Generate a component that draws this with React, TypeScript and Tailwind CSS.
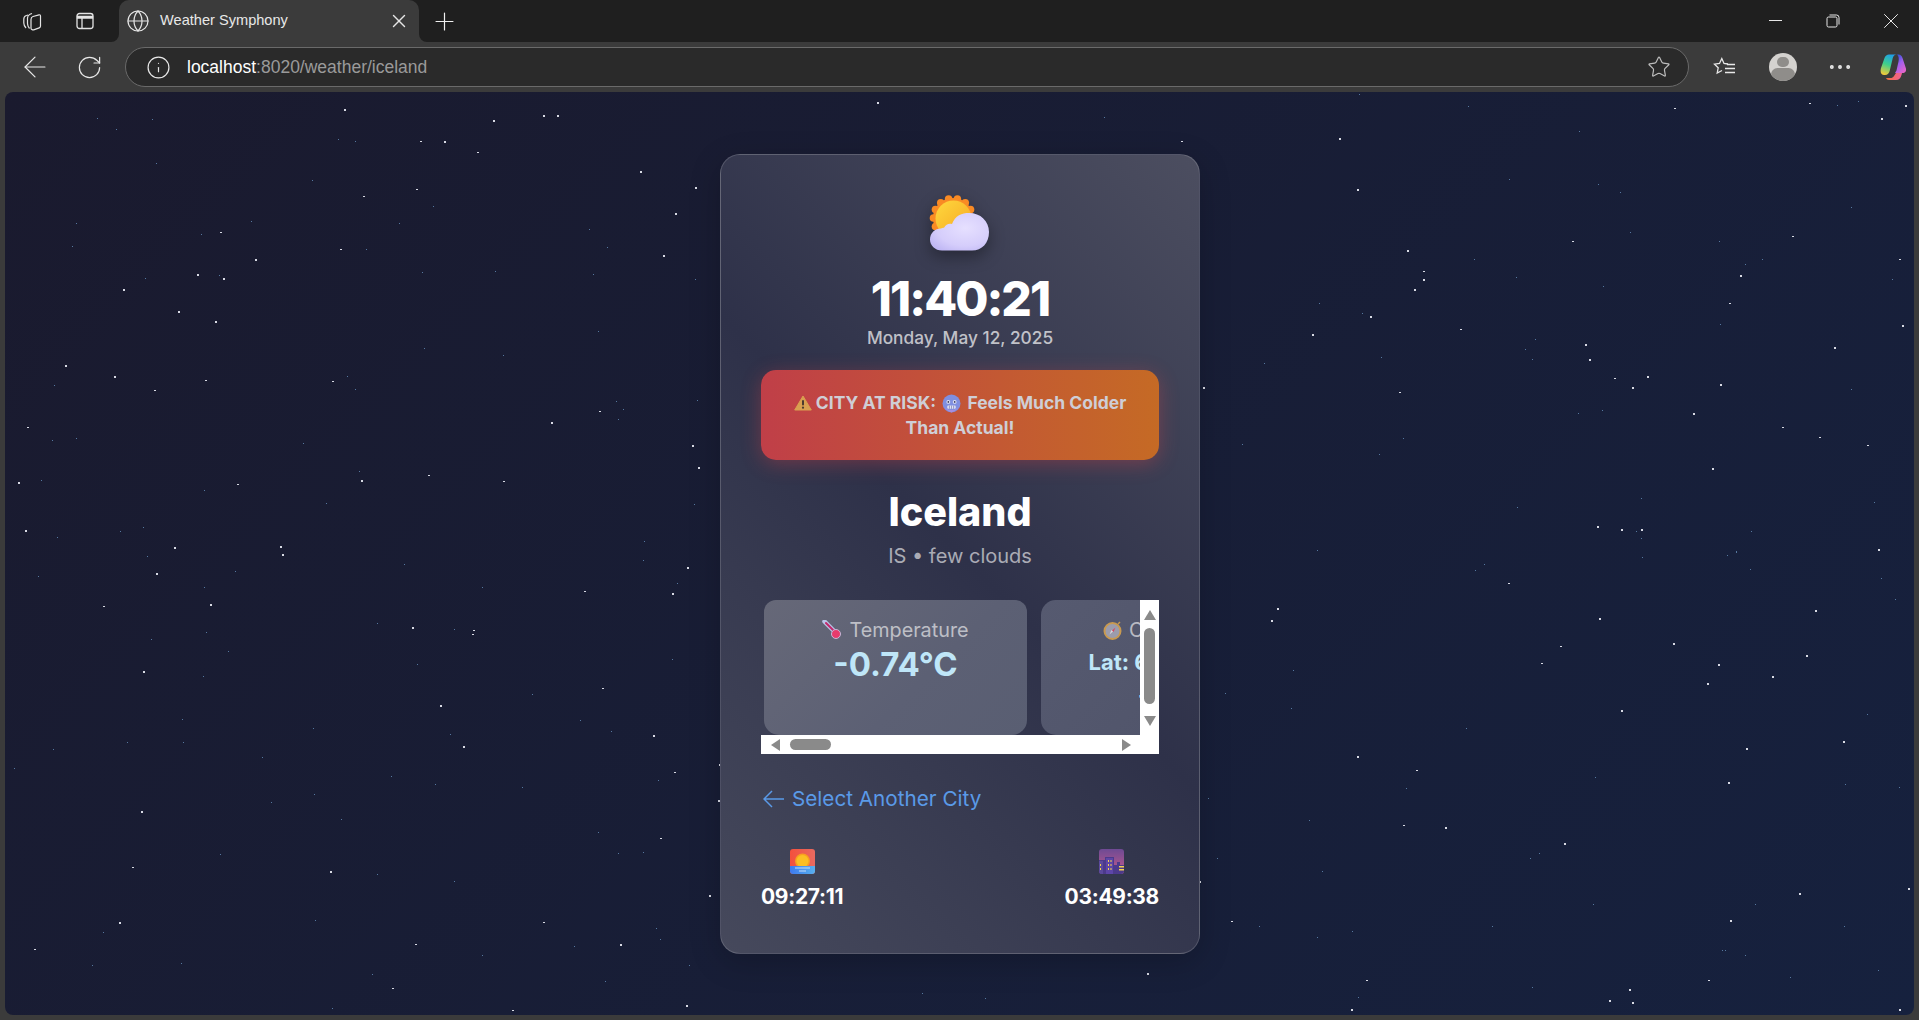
import { ArrowLeft, Globe, Info, MoreHorizontal, Plus, RotateCw, Star, X } from 'lucide-react'

// star field, seeded so it stays the same on every load
function makeStars() {
  let seed = 20250512
  const rnd = () => {
    seed = (seed * 1664525 + 1013904223) % 4294967296
    return seed / 4294967296
  }
  const stars = []
  for (let i = 0; i < 400; i++) {
    const bright = rnd() > 0.62
    stars.push({
      x: Math.floor(rnd() * 1909),
      y: Math.floor(rnd() * 922),
      w: bright ? 2 : 1,
      h: bright && rnd() > 0.35 ? 2 : 1,
      c: bright ? '#d8dae4' : '#56789f',
    })
  }
  return stars
}

const stars = makeStars()
const scallops = [0, 26, 51, 77, 103, 129, 154, 180, 206, 231, 257, 283, 309, 334]

function SunCloud() {
  return (
    <svg width="62" height="58" viewBox="0 0 62 58" className="drop-shadow-[0_6px_8px_rgba(0,0,0,0.35)]">
      <defs>
        <linearGradient id="sun" x1="0" y1="0" x2="1" y2="1">
          <stop offset="0" stopColor="#ffd83d" />
          <stop offset="1" stopColor="#f5a623" />
        </linearGradient>
        <radialGradient id="cloud" cx="0.6" cy="0.4" r="0.8">
          <stop offset="0" stopColor="#e6e0ff" />
          <stop offset="0.6" stopColor="#d5cdfb" />
          <stop offset="1" stopColor="#b9b0f2" />
        </radialGradient>
      </defs>
      {scallops.map((a) => (
        <circle
          key={a}
          cx={24 + 19.5 * Math.cos((a * Math.PI) / 180)}
          cy={23 + 19.5 * Math.sin((a * Math.PI) / 180)}
          r="3.800"
          fill="#f98a24"
        />
      ))}
      <circle cx="24" cy="23" r="20" fill="#f98a24" />
      <circle cx="24.500" cy="23.500" r="18" fill="url(#sun)" />
      <path
        d="M13 55.500C6 55.500 1 50.500 1 44.500 1 38 6 33.500 12 33.500c1-.4 2-1 3-.8 2-3.600 5-4.600 8-3.600C26 20.500 33 18 40 18c11.500 0 20 8 20 19 0 11-7 18.500-17 18.500Z"
        fill="url(#cloud)"
      />
    </svg>
  )
}

function ThermometerIcon() {
  return (
    <svg width="20" height="20" viewBox="0 0 20 20">
      <path d="M2.500 1.500 13.500 12.500" stroke="#b9c4e8" strokeWidth="4.500" strokeLinecap="round" />
      <path d="M4 3 13.500 12.500" stroke="#c2286a" strokeWidth="2" strokeLinecap="round" />
      <circle cx="14" cy="14" r="4.500" fill="#e83a6c" stroke="#c7b6d8" strokeWidth="1" />
    </svg>
  )
}

function CompassIcon() {
  return (
    <svg width="19" height="19" viewBox="0 0 19 19">
      <circle cx="9.500" cy="10" r="8" fill="#9c9cac" stroke="#c99a50" strokeWidth="2" />
      <path d="m12.500 6.500-2 4.500-1.500-1.500Z" fill="#d84860" />
      <path d="m6.500 13.500 2-4.500 1.500 1.500Z" fill="#d8d8e0" />
      <path d="m15 3 2-2" stroke="#c99a50" strokeWidth="1.500" />
    </svg>
  )
}

function WarningIcon() {
  return (
    <svg width="18" height="16" viewBox="0 0 18 16" className="inline-block align-[-2px]">
      <path d="M9 1 17.300 15H.7Z" fill="#d9a050" stroke="#d9a050" strokeLinejoin="round" />
      <rect x="8" y="5" width="2" height="5.500" rx="1" fill="#4a3a30" />
      <circle cx="9" cy="12.700" r="1.100" fill="#4a3a30" />
    </svg>
  )
}

function ColdFaceIcon() {
  return (
    <svg width="19" height="19" viewBox="0 0 18 18" className="inline-block align-[-4px] mx-[2px]">
      <circle cx="9" cy="9" r="8.500" fill="#7f8fe0" />
      <path d="M.8 9a8.500 8.500 0 0 0 16.400 0c-1 1-1 6-8.200 8.500C2 15 1.800 10 .8 9Z" fill="#a58ee0" />
      <circle cx="6" cy="7.500" r="1.800" fill="#e0e4f4" />
      <circle cx="12" cy="7.500" r="1.800" fill="#e0e4f4" />
      <circle cx="6" cy="7.500" r=".8" fill="#33335a" />
      <circle cx="12" cy="7.500" r=".8" fill="#33335a" />
      <rect x="5" y="11" width="8" height="3" rx="1" fill="#e0e4f4" />
      <path d="M7 11v3M9 11v3M11 11v3" stroke="#6a6aa8" strokeWidth=".6" />
    </svg>
  )
}

function SunriseIcon() {
  return (
    <svg width="25" height="25" viewBox="0 0 25 25">
      <defs>
        <linearGradient id="rise" x1="0" y1="0" x2="1" y2="0">
          <stop offset="0" stopColor="#f4503c" />
          <stop offset="1" stopColor="#e86a60" />
        </linearGradient>
        <linearGradient id="sea" x1="0" y1="0" x2="1" y2="0">
          <stop offset="0" stopColor="#3d7af0" />
          <stop offset="1" stopColor="#58b0ee" />
        </linearGradient>
        <clipPath id="riseClip">
          <rect width="25" height="25" rx="3" />
        </clipPath>
      </defs>
      <g clipPath="url(#riseClip)">
        <rect width="25" height="25" fill="url(#rise)" />
        <circle cx="12.500" cy="12" r="7.500" fill="#f8a020" />
        <circle cx="12.500" cy="12" r="6" fill="#fbbf24" />
        <rect y="17" width="25" height="8" fill="url(#sea)" />
        <path d="M5 19h15M9 22h7" stroke="#c4def8" strokeWidth="1" />
      </g>
    </svg>
  )
}

function CityDuskIcon() {
  return (
    <svg width="25" height="25" viewBox="0 0 25 25">
      <defs>
        <linearGradient id="dusk" x1="0" y1="0" x2="0" y2="1">
          <stop offset="0" stopColor="#6e4a94" />
          <stop offset="1" stopColor="#c45a8c" />
        </linearGradient>
        <clipPath id="duskClip">
          <rect width="25" height="25" rx="3" />
        </clipPath>
      </defs>
      <g clipPath="url(#duskClip)">
        <rect width="25" height="25" fill="url(#dusk)" />
        <path d="M0 11h6V8h9v8h3v-3h3v3h4v9H0Z" fill="#4c3a8c" />
        <path d="M0 12h4v13H0Z" fill="#5c4a9c" />
        <path d="M7 9h7v16H7Z" fill="#5e46a8" />
        <path d="M9 11h1v2H9Zm2.500 0h1v2h-1ZM9 15h1v2H9Zm2.500 0h1v2h-1ZM9 19h1v2H9Zm2.500 0h1v2h-1ZM1 15h1v2H1Zm0 4h1v2H1Z" fill="#f4d050" />
        <path d="M20 17h5v1.500h-5Zm0 3h5v1.500h-5Z" fill="#f4d050" />
      </g>
    </svg>
  )
}

function CopilotIcon() {
  return (
    <svg width="28" height="28" viewBox="0 0 28 28">
      <defs>
        <linearGradient id="cpA" x1="0.6" y1="0" x2="0.3" y2="1">
          <stop offset="0" stopColor="#1f9fe8" />
          <stop offset="0.5" stopColor="#3fd08a" />
          <stop offset="1" stopColor="#f2c93a" />
        </linearGradient>
        <linearGradient id="cpB" x1="0.2" y1="0" x2="0.8" y2="1">
          <stop offset="0" stopColor="#2a50d8" />
          <stop offset="0.45" stopColor="#a060ec" />
          <stop offset="1" stopColor="#e864c8" />
        </linearGradient>
        <linearGradient id="cpC" x1="0" y1="0" x2="1" y2="0">
          <stop offset="0" stopColor="#f0703a" />
          <stop offset="1" stopColor="#f0609a" />
        </linearGradient>
      </defs>
      <path d="M10 27h7c3 0 4.500-1.500 5.500-5l.5-2h-6l-2 3c-1 1.500-2 2-3.500 2H7c.5 1 1.500 2 3 2Z" fill="url(#cpC)" />
      <path d="M2 15 5.500 5C6.300 2.800 8 1.500 10 1.500h8c-2.500 0-3.700 1.500-4.300 3.700l-2.900 12.300C10.300 20 8.500 22 6 22H5c-3 0-4-3-3-7Z" fill="url(#cpA)" />
      <path d="M18 1.500h1.500c2 0 3.300 1.300 4 3.500l3.300 10c.9 3-.6 5-3.300 5h-7.500l1.500-2.500 2-9c.5-2.500.5-5.500-1.500-7Z" fill="url(#cpB)" />
    </svg>
  )
}

function Triangle({ dir }: { dir: 'up' | 'down' | 'left' | 'right' }) {
  const points = {
    up: '0,10 6,0 12,10',
    down: '0,0 12,0 6,10',
    left: '9,0 9,12 0,6',
    right: '0,0 9,6 0,12',
  }[dir]
  const size = dir === 'up' || dir === 'down' ? 'w-[12px] h-[10px]' : 'w-[9px] h-[12px]'
  return (
    <svg viewBox={dir === 'up' || dir === 'down' ? '0 0 12 10' : '0 0 9 12'} className={size}>
      <polygon points={points} fill="#8a8a8a" />
    </svg>
  )
}

export default function App() {
  return (
    <div className="w-screen h-screen overflow-hidden flex flex-col bg-[#3b3b3b] font-['Inter',sans-serif]">
      {/* Tab strip */}
      <div className="h-[42px] flex-shrink-0 flex text-white">
        <div className="w-[119px] bg-[#1f1f1f] rounded-br-[8px] flex items-center pl-[21px] gap-[32px] text-[#e4e4e4]">
          <svg width="22" height="22" viewBox="0 0 22 22" fill="none" stroke="currentColor" strokeWidth="1.200">
            <path d="M7 5 5.500 5.500C3.800 6 2.800 7.500 2.800 9v4c0 2 .9 3.500 2.200 5" />
            <path d="M11 3.500 9 4.300C7.500 5 6.500 6.500 6.500 8v5.500c0 1.800.7 3.500 2 5" />
            <path d="M12 6.500 18 4.800c.8-.2 1.500.3 1.500 1.200v10c0 .9-.5 1.600-1.300 1.900l-5.500 2c-1.300.3-2.700-.6-2.700-2V9.500c0-1.500.8-2.600 2-3Z" />
          </svg>
          <svg width="20" height="20" viewBox="0 0 20 20" fill="none" stroke="currentColor" strokeWidth="1.300">
            <rect x="2" y="2.500" width="16" height="15" rx="2.500" />
            <path d="M2.500 5.500h15v1.500h-15Z" fill="currentColor" />
            <path d="M7 6v11" />
          </svg>
        </div>
        <div className="w-[300px] bg-[linear-gradient(#1f1f1f_50%,#3b3b3b_50%)]">
          <div className="h-full bg-[#3b3b3b] rounded-t-[10px] flex items-center pl-[7px] pr-[9px] gap-[10px]">
            <Globe size={24} strokeWidth={1.2} absoluteStrokeWidth className="text-[#e6e6e6]" />
            <span className="flex-1 text-[14.600px] text-[#e8e8e8] font-['Liberation_Sans',sans-serif]">Weather Symphony</span>
            <X size={22} strokeWidth={1.4} absoluteStrokeWidth className="text-[#e6e6e6]" />
          </div>
        </div>
        <div className="flex-1 bg-[#1f1f1f] rounded-bl-[8px] flex items-center pl-[11px] pr-[15px] text-[#e8e8e8]">
          <Plus size={29} strokeWidth={1.2} absoluteStrokeWidth className="text-[#f0f0f0]" />
          <div className="flex-1" />
          <svg width="14" height="14" viewBox="0 0 14 14" className="mr-[43px]" stroke="currentColor" strokeWidth="1"><path d="M0 6.500h13" /></svg>
          <svg width="14" height="14" viewBox="0 0 14 14" fill="none" className="mr-[38px]" stroke="currentColor" strokeWidth="1">
            <rect x="1" y="3" width="10" height="10" rx="1.500" />
            <path d="M3.500 1h7a2.500 2.500 0 0 1 2.500 2.500v7" />
          </svg>
          <X size={26} strokeWidth={1} absoluteStrokeWidth />
        </div>
      </div>

      {/* Toolbar */}
      <div className="h-[50px] flex-shrink-0 flex items-center pl-[18px] pr-[12px] text-[#e8e8e8]">
        <ArrowLeft size={34} strokeWidth={1.2} absoluteStrokeWidth />
        <RotateCw size={27} strokeWidth={1.2} absoluteStrokeWidth className="ml-[24px]" />
        <div className="ml-[22px] h-[40px] flex-1 rounded-full bg-[#2a2a2a] border border-[#6a6a6a] flex items-center pl-[20px] pr-[17px]">
          <Info size={25} strokeWidth={1.2} absoluteStrokeWidth />
          <span className="ml-[16px] flex-1 text-[17.500px] font-['Liberation_Sans',sans-serif] text-[#9a9a9a]">
            <span className="text-white">localhost</span>:8020/weather/iceland
          </span>
          <Star size={24} strokeWidth={1.2} absoluteStrokeWidth className="text-[#bdbdbd]" />
        </div>
        <svg width="24" height="24" viewBox="0 0 24 24" fill="none" stroke="currentColor" strokeWidth="1.300" className="ml-[24px]">
          <path d="M15 9 11 8.500 8.800 3.500 6.500 8.500 1.500 9.200 5.200 12.800 4.200 18 9 15.500" />
          <path d="M14 9.500h8M12 13.500h10M12 17.500h10" />
        </svg>
        <div className="ml-[32px] w-[28px] h-[28px] rounded-full bg-[#d4d2cf] overflow-hidden flex flex-col items-center">
          <div className="mt-[4px] w-[12px] h-[12px] rounded-full bg-[#8f8d8a]" />
          <div className="mt-[1px] w-[24px] h-[16px] rounded-full bg-[#8f8d8a]" />
        </div>
        <MoreHorizontal size={28} strokeWidth={1.6} absoluteStrokeWidth className="ml-[29px]" />
        <div className="ml-[25px]"><CopilotIcon /></div>
      </div>

      {/* Page */}
      <div className="relative flex-1 mx-[5px] mb-[5px] rounded-[8px] overflow-hidden bg-[linear-gradient(135deg,#1a1a2e,#16213e)] flex justify-center">
        <svg className="absolute inset-0 w-full h-full">
          {stars.map((st, i) => (
            <rect key={i} x={st.x} y={st.y} width={st.w} height={st.h} fill={st.c} />
          ))}
        </svg>

        {/* Weather card */}
        <div className="relative mt-[62px] w-[480px] h-[800px] ml-[1px] rounded-[20px] border border-white/15 bg-[linear-gradient(45deg,#46495c,#2e3149_50%,#4c4e60)] px-[40px] pt-[40px] shadow-[0_8px_32px_rgba(0,0,0,0.2)] flex flex-col text-white">
          <div className="flex justify-center"><SunCloud /></div>
          <div className="mt-[19px] text-center text-[48px] leading-[54px] font-extrabold tracking-[-2px]">11:40:21</div>
          <div className="text-center text-[17.300px] leading-[24px] font-medium text-white/70">Monday, May 12, 2025</div>

          <div className="mt-[20px] h-[90px] rounded-[15px] bg-[linear-gradient(90deg,#c03f48,#c56a25)] shadow-[0_4px_20px_rgba(255,70,70,0.3)] flex items-center justify-center px-[20px] text-center text-[17.500px] leading-[25px] font-bold text-[#cfced6]">
            <p>
              <WarningIcon /> CITY AT RISK: <ColdFaceIcon /> Feels Much Colder Than Actual!
            </p>
          </div>

          <h1 className="mt-[28px] text-center text-[39.500px] leading-[48px] font-extrabold">Iceland</h1>
          <p className="mt-[6px] text-center text-[20px] leading-[28px] text-white/60">IS • few clouds</p>

          {/* Stat cards, with the scrollbars the browser painted */}
          <div className="mt-[30px] h-[154px] flex flex-col">
            <div className="flex-1 flex min-h-0">
              <div className="flex-1 overflow-hidden flex pl-[3px] gap-[14px]">
                <div className="w-[263px] flex-shrink-0 rounded-b-[15px] rounded-t-[12px] bg-[linear-gradient(135deg,#666878,#5c6074_60%,#595e72)] pt-[18px] text-center">
                  <div className="flex items-center justify-center gap-[7px] text-[19.800px] leading-[24px] text-white/60">
                    <ThermometerIcon /> Temperature
                  </div>
                  <div className="mt-[2px] text-[33px] leading-[40px] font-bold text-[#bfe6f8]">-0.74°C</div>
                </div>
                <div className="w-[263px] flex-shrink-0 rounded-b-[15px] rounded-t-[15px] bg-[linear-gradient(135deg,#565a70,#4e5268)] pt-[18px] text-center">
                  <div className="flex items-center justify-center gap-[7px] text-[19.800px] leading-[24px] text-white/60">
                    <CompassIcon /> Coordinates
                  </div>
                  <div className="mt-[3px] text-[22px] leading-[34px] font-bold text-[#bfe6f8]">Lat: 64.96, Lon:<br />-19.02</div>
                </div>
              </div>
              <div className="w-[19px] flex-shrink-0 bg-white flex flex-col items-center pt-[10px]">
                <Triangle dir="up" />
                <div className="mt-[8px] w-[11px] h-[76px] rounded-full bg-[#8a8a8a]" />
                <div className="mt-[12px]"><Triangle dir="down" /></div>
              </div>
            </div>
            <div className="h-[19px] flex-shrink-0 bg-white flex items-center pl-[10px] pr-[28px]">
              <Triangle dir="left" />
              <div className="ml-[10px] w-[41px] h-[11px] rounded-full bg-[#8a8a8a]" />
              <div className="flex-1" />
              <Triangle dir="right" />
            </div>
          </div>

          <a className="mt-[31px] flex items-center gap-[7px] text-[20.700px] leading-[28px] text-[#5a9ae8]">
            <svg width="22" height="18" viewBox="0 0 22 18" fill="none" stroke="currentColor" strokeWidth="1.500" className="ml-[2px]">
              <path d="M21 9H1M9 1 1 9l8 8" />
            </svg>
            Select Another City
          </a>

          <div className="mt-[36px] flex justify-between text-[21px] leading-[30px] font-bold tracking-[-0.3px]">
            <div className="flex flex-col items-center gap-[8px]"><SunriseIcon /> 09:27:11</div>
            <div className="flex flex-col items-center gap-[8px]"><CityDuskIcon /> 03:49:38</div>
          </div>
        </div>
      </div>
    </div>
  )
}
